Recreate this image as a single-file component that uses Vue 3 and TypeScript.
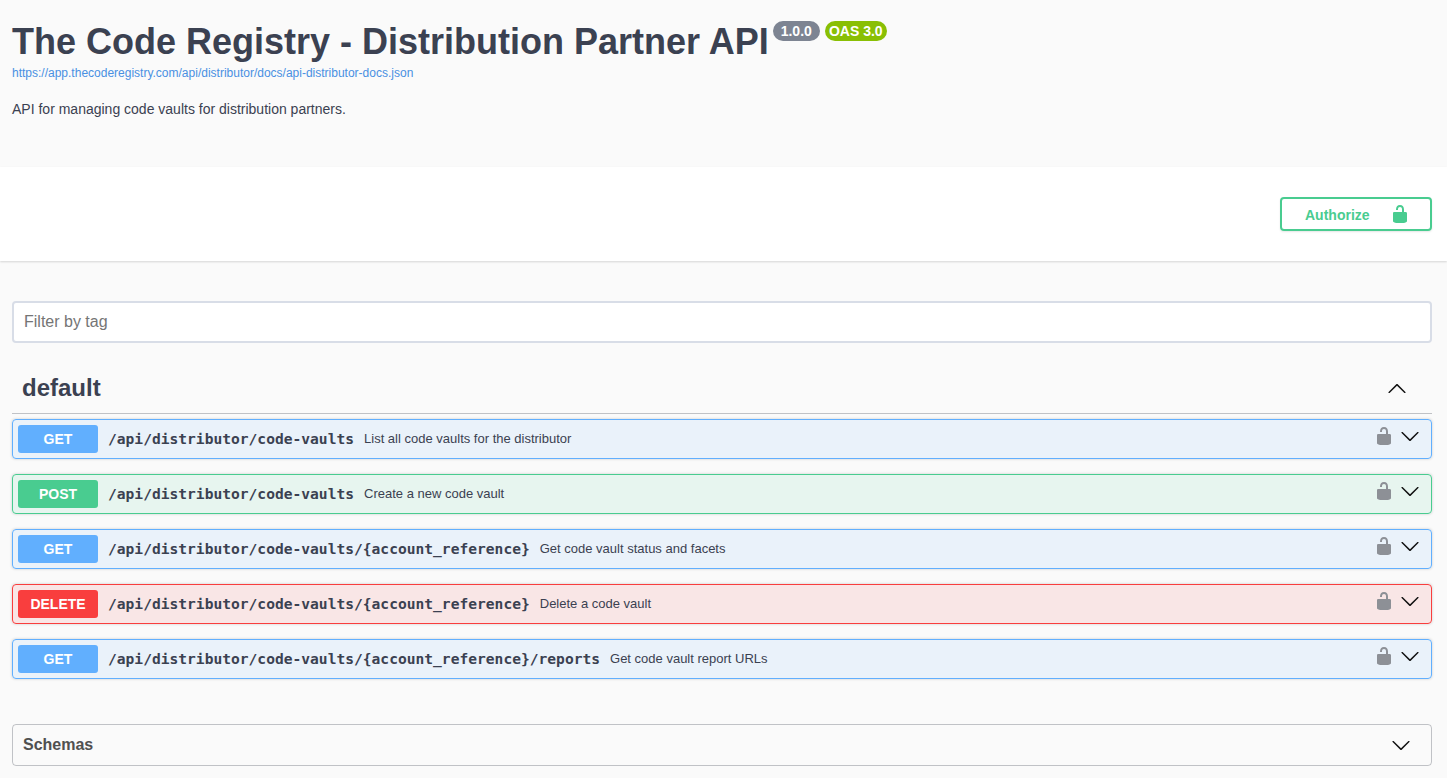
<template>
  <div class="page">
    <section class="hero">
      <div class="title-row">
        <h1>The Code Registry - Distribution Partner API</h1>
        <span class="badge version">1.0.0</span>
        <span class="badge oas">OAS 3.0</span>
      </div>
      <a class="spec-link" href="#">https://app.thecoderegistry.com/api/distributor/docs/api-distributor-docs.json</a>
      <p class="desc">API for managing code vaults for distribution partners.</p>
    </section>

    <section class="auth-bar">
      <button class="authorize">
        <span>Authorize</span>
        <svg width="20" height="20" viewBox="0 0 20 20" fill="currentColor">
          <path d="M15.8 8H14V5.6C14 2.703 12.665 1 10 1 7.334 1 6 2.703 6 5.6V6h2v-.801C8 3.754 8.797 3 10 3c1.203 0 2 .754 2 2.199V8H4c-.553 0-1 .646-1 1.199V17c0 .549.428 1.139.951 1.307l1.197.387C5.672 18.861 6.55 19 7.1 19h5.8c.549 0 1.428-.139 1.951-.307l1.196-.387c.524-.167.953-.757.953-1.306V9.199C17 8.646 16.352 8 15.8 8z" />
        </svg>
      </button>
    </section>

    <main class="content">
      <input class="filter" type="text" placeholder="Filter by tag" />

      <div class="tag-head">
        <h3>default</h3>
        <svg class="chev" width="20" height="20" viewBox="0 0 20 20" fill="#111">
          <path d="M 17.418 14.908 C 17.69 15.176 18.127 15.176 18.397 14.908 C 18.667 14.64 18.668 14.207 18.397 13.939 L 10.489 6.109 C 10.219 5.841 9.782 5.841 9.51 6.109 L 1.602 13.939 C 1.332 14.207 1.332 14.64 1.602 14.908 C 1.873 15.176 2.311 15.176 2.581 14.908 L 10 7.767 L 17.418 14.908 Z" />
        </svg>
      </div>

      <div class="ops">
        <div v-for="op in ops" :key="op.method + op.path" class="op" :class="op.method.toLowerCase()">
          <span class="method">{{ op.method }}</span>
          <span class="path">{{ op.path }}</span>
          <span class="summary">{{ op.summary }}</span>
          <svg class="lock" width="20" height="20" viewBox="0 0 20 20" fill="#8d9096">
            <path d="M15.8 8H14V5.6C14 2.703 12.665 1 10 1 7.334 1 6 2.703 6 5.6V6h2v-.801C8 3.754 8.797 3 10 3c1.203 0 2 .754 2 2.199V8H4c-.553 0-1 .646-1 1.199V17c0 .549.428 1.139.951 1.307l1.197.387C5.672 18.861 6.55 19 7.1 19h5.8c.549 0 1.428-.139 1.951-.307l1.196-.387c.524-.167.953-.757.953-1.306V9.199C17 8.646 16.352 8 15.8 8z" />
          </svg>
          <svg class="chev op-chev" width="20" height="20" viewBox="0 0 20 20" fill="#111">
            <path d="M 17.418 6.109 C 17.69 5.841 18.127 5.841 18.397 6.109 C 18.667 6.377 18.668 6.81 18.397 7.078 L 10.489 14.908 C 10.219 15.176 9.782 15.176 9.51 14.908 L 1.602 7.078 C 1.332 6.81 1.332 6.377 1.602 6.109 C 1.873 5.841 2.311 5.841 2.581 6.109 L 10 13.25 L 17.418 6.109 Z" />
          </svg>
        </div>
      </div>

      <div class="schemas">
        <span>Schemas</span>
        <svg class="chev" width="20" height="20" viewBox="0 0 20 20" fill="#111">
          <path d="M 17.418 6.109 C 17.69 5.841 18.127 5.841 18.397 6.109 C 18.667 6.377 18.668 6.81 18.397 7.078 L 10.489 14.908 C 10.219 15.176 9.782 15.176 9.51 14.908 L 1.602 7.078 C 1.332 6.81 1.332 6.377 1.602 6.109 C 1.873 5.841 2.311 5.841 2.581 6.109 L 10 13.25 L 17.418 6.109 Z" />
        </svg>
      </div>
    </main>
  </div>
</template>

<script setup lang="ts">
interface Operation {
  method: string;
  path: string;
  summary: string;
}

const ops: Operation[] = [
  { method: "GET", path: "/api/distributor/code-vaults", summary: "List all code vaults for the distributor" },
  { method: "POST", path: "/api/distributor/code-vaults", summary: "Create a new code vault" },
  { method: "GET", path: "/api/distributor/code-vaults/{account_reference}", summary: "Get code vault status and facets" },
  { method: "DELETE", path: "/api/distributor/code-vaults/{account_reference}", summary: "Delete a code vault" },
  { method: "GET", path: "/api/distributor/code-vaults/{account_reference}/reports", summary: "Get code vault report URLs" },
];
</script>

<style>
html,
body {
  margin: 0;
  background: #fafafa;
}
</style>

<style scoped>
.page {
  font-family: "Liberation Sans", Arial, sans-serif;
  color: #3b4151;
  height: 778px;
  overflow: hidden;
}
.hero {
  height: 167px;
  box-sizing: border-box;
  padding: 20px 12px 0;
}
.title-row {
  display: flex;
  align-items: flex-start;
}
h1 {
  margin: 0;
  font-size: 36px;
  line-height: 44px;
  font-weight: 700;
  white-space: nowrap;
}
.badge {
  margin-top: 1px;
  height: 20px;
  line-height: 20px;
  border-radius: 10px;
  color: #fff;
  font-size: 14px;
  font-weight: 700;
  text-align: center;
  box-sizing: border-box;
}
.version {
  margin-left: 4px;
  width: 47px;
  background: #7d8492;
}
.oas {
  margin-left: 5px;
  width: 62px;
  background: #89bf04;
}
.spec-link {
  display: block;
  margin-top: 2px;
  font-size: 12px;
  line-height: 14px;
  color: #4990e2;
  text-decoration: none;
}
.desc {
  margin: 21px 0 0;
  font-size: 14px;
  line-height: 16px;
}
.auth-bar {
  height: 94px;
  box-sizing: border-box;
  background: #fff;
  box-shadow: 0 1px 2px 0 rgba(0, 0, 0, 0.15);
  padding: 30px 15px 0 0;
  display: flex;
  justify-content: flex-end;
  align-items: flex-start;
}
.authorize {
  width: 152px;
  height: 34px;
  box-sizing: border-box;
  border: 2px solid #49cc90;
  border-radius: 4px;
  background: transparent;
  box-shadow: 0 1px 2px rgba(0, 0, 0, 0.1);
  color: #49cc90;
  font-family: inherit;
  font-size: 14px;
  font-weight: 700;
  display: flex;
  align-items: center;
  padding: 0 20px 0 23px;
  justify-content: space-between;
}
.authorize span {
  margin-top: 2px;
}
.content {
  padding: 40px 15px 0 12px;
}
.filter {
  display: block;
  width: 100%;
  height: 42px;
  box-sizing: border-box;
  border: 2px solid #d8dde7;
  border-radius: 4px;
  background: #fff;
  padding: 0 10px;
  font-family: inherit;
  font-size: 16px;
  color: #3b4151;
  outline: none;
}
.filter::placeholder {
  color: #757575;
}
.tag-head {
  margin-top: 20px;
  height: 51px;
  box-sizing: border-box;
  border-bottom: 1px solid rgba(59, 65, 81, 0.3);
  display: flex;
  align-items: center;
  justify-content: space-between;
  padding: 0 25px 1px 10px;
}
.tag-head h3 {
  margin: 0;
  font-size: 24px;
  font-weight: 700;
}
.ops {
  margin-top: 5px;
  display: flex;
  flex-direction: column;
  gap: 15px;
}
.op {
  height: 40px;
  box-sizing: border-box;
  border: 1px solid;
  border-radius: 4px;
  box-shadow: 0 0 3px rgba(0, 0, 0, 0.19);
  display: flex;
  align-items: center;
  padding: 0 11px 0 5px;
}
.get {
  background: rgba(97, 175, 254, 0.1);
  border-color: #61affe;
}
.post {
  background: rgba(73, 204, 144, 0.1);
  border-color: #49cc90;
}
.delete {
  background: rgba(249, 62, 62, 0.1);
  border-color: #f93e3e;
}
.method {
  width: 80px;
  height: 28px;
  line-height: 28px;
  flex: none;
  border-radius: 3px;
  color: #fff;
  font-size: 14px;
  font-weight: 700;
  text-align: center;
}
.get .method {
  background: #61affe;
}
.post .method {
  background: #49cc90;
}
.delete .method {
  background: #f93e3e;
}
.path {
  margin-left: 10px;
  margin-bottom: 2px;
  font-family: "DejaVu Sans Mono", monospace;
  font-size: 14.6px;
  font-weight: 700;
  white-space: nowrap;
}
.summary {
  margin-left: 10px;
  margin-bottom: 2px;
  font-size: 13px;
  flex: 1;
  white-space: nowrap;
}
.lock {
  flex: none;
  margin-top: -6px;
  margin-right: 6px;
}
.op-chev {
  flex: none;
  margin-top: -6px;
}
.schemas {
  margin-top: 45px;
  height: 42px;
  box-sizing: border-box;
  border: 1px solid rgba(59, 65, 81, 0.3);
  border-radius: 4px;
  display: flex;
  align-items: center;
  justify-content: space-between;
  padding: 0 20px 0 10px;
  font-size: 16px;
  font-weight: 700;
  color: #505050;
}
</style>
